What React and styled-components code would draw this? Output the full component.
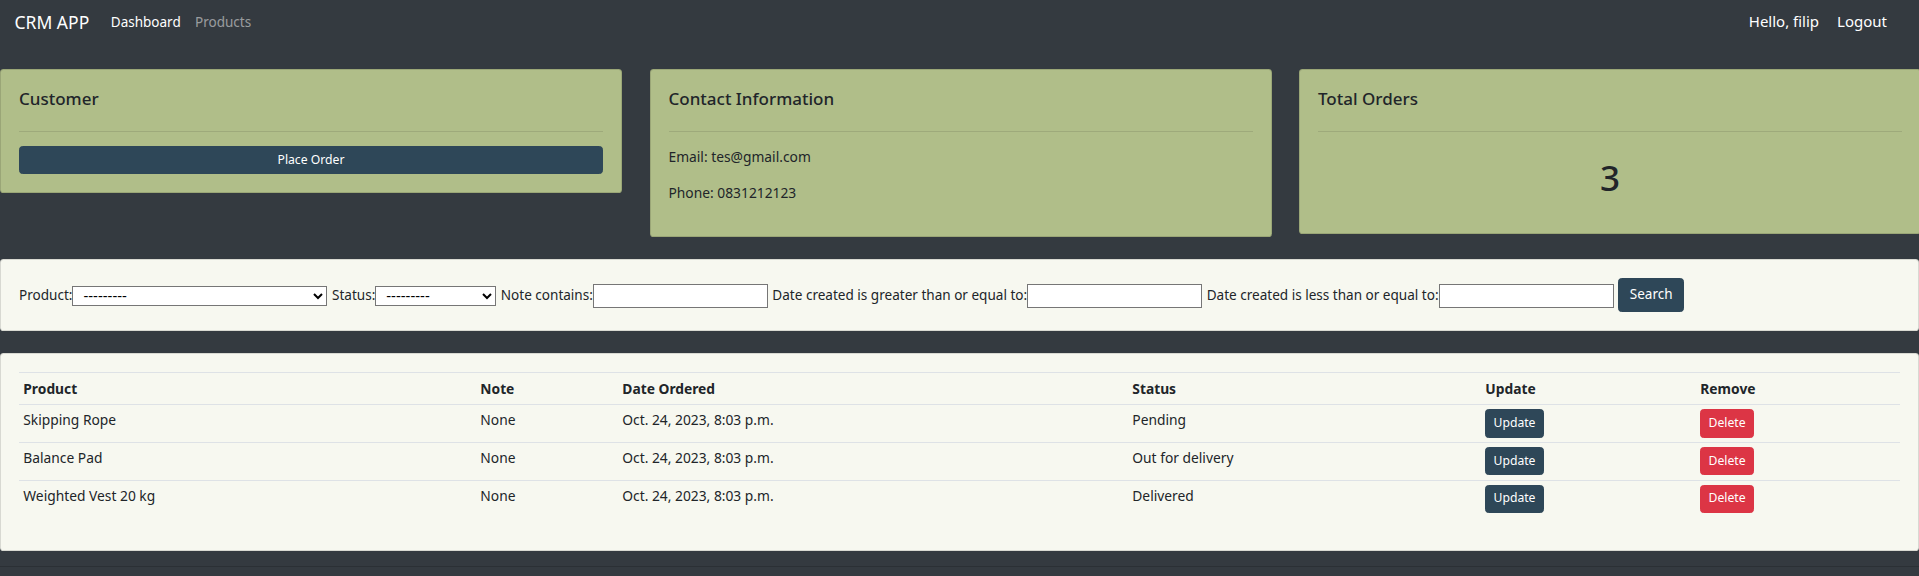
import React from "react";
import styled, { createGlobalStyle } from "styled-components";

const GlobalStyle = createGlobalStyle`
	html, body {
		margin: 0;
		padding: 0;
		background-color: #343a40;
		overflow-x: hidden;
	}
	body {
		font-family: "Noto Sans", "Open Sans", sans-serif;
		font-size: 13.8px;
		line-height: 21.6px;
		color: #212529;
	}
	* {
		box-sizing: border-box;
	}
`;

const Navbar = styled.nav`
	height: 52px;
	display: flex;
	align-items: center;
	padding: 0 32px 0 14.5px;
	background-color: #343a40;
`;

const Brand = styled.div`
	font-size: 17.5px;
	color: #fff;
	margin-right: 14.4px;
	margin-top: -7px;
`;

const NavLink = styled.a`
	font-size: 13.5px;
	padding: 0 7.2px;
	margin-top: -7px;
	color: ${(props) => (props.active ? "#fff" : "rgba(255, 255, 255, 0.5)")};
	text-decoration: none;
`;

const NavRight = styled.div`
	margin-left: auto;
	display: flex;
	gap: 18px;
	margin-top: -8px;
	font-size: 15px;
	color: #fff;
`;

const Main = styled.main`
	padding-top: 16.5px;
`;

const CardRow = styled.div`
	display: grid;
	grid-template-columns: repeat(3, 622px);
	column-gap: 27.5px;
	align-items: start;
`;

const Card = styled.div`
	display: flex;
	flex-direction: column;
	background-color: #b0be89;
	border: 1px solid rgba(0, 0, 0, 0.125);
	border-radius: 3.6px;
	padding: 18px;
`;

const CardTitle = styled.h5`
	margin: 0 0 7.2px;
	font-size: 17px;
	font-weight: 500;
	line-height: 21.6px;
	color: #212529;
`;

const Divider = styled.hr`
	width: 100%;
	margin: 14.4px 0;
	border: 0;
	border-top: 1px solid rgba(0, 0, 0, 0.1);
`;

const Info = styled.p`
	margin: 0 0 14.4px;
`;

const BigNumber = styled.h1`
	margin: 11px 0 16px;
	font-size: 35px;
	font-weight: 500;
	line-height: 1.2;
	text-align: center;
`;

const Button = styled.button`
	font-family: inherit;
	color: #fff;
	background-color: ${(props) => (props.danger ? "#dc3545" : "#2e4758")};
	border: 1px solid ${(props) => (props.danger ? "#dc3545" : "#2e4758")};
	border-radius: 3.6px;
	font-size: ${(props) => (props.small ? "12.2px" : "13.5px")};
	line-height: ${(props) => (props.small ? "18.9px" : "21.6px")};
	padding: ${(props) => (props.small ? "3.6px 7.2px" : "5.4px 10.8px")};
	width: ${(props) => (props.block ? "100%" : "auto")};
	cursor: pointer;
`;

const Panel = styled.div`
	margin-top: ${(props) => props.mt}px;
	background-color: #f7f8f0;
	border: 1px solid rgba(0, 0, 0, 0.125);
	border-radius: 3.6px;
	padding: 18px;
`;

const FilterForm = styled.form`
	display: flex;
	align-items: center;
	flex-wrap: nowrap;
	font-size: 13.55px;
	white-space: nowrap;
`;

const Field = styled.label`
	display: flex;
	align-items: center;
	margin-right: 4.5px;
	margin-top: 1px;
`;

const Select = styled.select`
	width: ${(props) => props.w}px;
	height: 20px;
	font-family: "Liberation Sans", Arial, sans-serif;
	font-size: 14.5px;
	line-height: 18px;
	color: #000;
	background-color: #fff;
	border: 1px solid #767676;
	border-radius: 0;
	padding: 0 0 0 6px;
`;

const TextInput = styled.input`
	width: 175px;
	height: 24px;
	border: 1px solid #767676;
	border-radius: 0;
	padding: 1px 2px;
	background-color: #fff;
	font-size: 12px;
`;

const Table = styled.table`
	width: 100%;
	border-collapse: collapse;
	table-layout: fixed;
	margin-bottom: 14.4px;
	color: #212529;

	th,
	td {
		padding: 4.3px;
		text-align: left;
		vertical-align: top;
		border-top: 1px solid #dee2e6;
	}

	th {
		font-weight: 700;
		vertical-align: bottom;
		padding-top: 4.6px;
		padding-bottom: 5px;
		border-bottom: 1px solid #dee2e6;
	}
`;

const Footer = styled.div`
	margin-top: 15px;
	height: 14px;
	border-top: 1px solid #2b3035;
`;

const orders = [
	{ id: 1, product: "Skipping Rope", note: "None", date: "Oct. 24, 2023, 8:03 p.m.", status: "Pending" },
	{ id: 2, product: "Balance Pad", note: "None", date: "Oct. 24, 2023, 8:03 p.m.", status: "Out for delivery" },
	{ id: 3, product: "Weighted Vest 20 kg", note: "None", date: "Oct. 24, 2023, 8:03 p.m.", status: "Delivered" },
];

const columnWidths = [457, 142, 510, 353, 215, 204];

export default function App() {
	return (
		<>
			<GlobalStyle />
			<Navbar>
				<Brand>CRM APP</Brand>
				<NavLink active href="#">
					Dashboard
				</NavLink>
				<NavLink href="#">Products</NavLink>
				<NavRight>
					<span>Hello, filip</span>
					<span>Logout</span>
				</NavRight>
			</Navbar>
			<Main>
				<CardRow>
					<Card>
						<CardTitle>Customer</CardTitle>
						<Divider />
						<Button small block>
							Place Order
						</Button>
					</Card>
					<Card>
						<CardTitle>Contact Information</CardTitle>
						<Divider />
						<Info>Email: tes@gmail.com</Info>
						<Info>Phone: 0831212123</Info>
					</Card>
					<Card>
						<CardTitle>Total Orders</CardTitle>
						<Divider />
						<BigNumber>3</BigNumber>
					</Card>
				</CardRow>

				<Panel mt={22}>
					<FilterForm onSubmit={(e) => e.preventDefault()}>
						<Field>
							Product:
							<Select w={255}>
								<option>---------</option>
							</Select>
						</Field>
						<Field>
							Status:
							<Select w={121}>
								<option>---------</option>
							</Select>
						</Field>
						<Field>
							Note contains:
							<TextInput type="text" />
						</Field>
						<Field>
							Date created is greater than or equal to:
							<TextInput type="text" />
						</Field>
						<Field>
							Date created is less than or equal to:
							<TextInput type="text" />
						</Field>
						<Button type="submit">Search</Button>
					</FilterForm>
				</Panel>

				<Panel mt={21.6}>
					<Table>
						<colgroup>
							{columnWidths.map((w, i) => (
								<col key={i} style={{ width: w }} />
							))}
						</colgroup>
						<thead>
							<tr>
								<th>Product</th>
								<th>Note</th>
								<th>Date Ordered</th>
								<th>Status</th>
								<th>Update</th>
								<th>Remove</th>
							</tr>
						</thead>
						<tbody>
							{orders.map((order) => (
								<tr key={order.id}>
									<td>{order.product}</td>
									<td>{order.note}</td>
									<td>{order.date}</td>
									<td>{order.status}</td>
									<td>
										<Button small>Update</Button>
									</td>
									<td>
										<Button small danger>
											Delete
										</Button>
									</td>
								</tr>
							))}
						</tbody>
					</Table>
				</Panel>
				<Footer />
			</Main>
		</>
	);
}
